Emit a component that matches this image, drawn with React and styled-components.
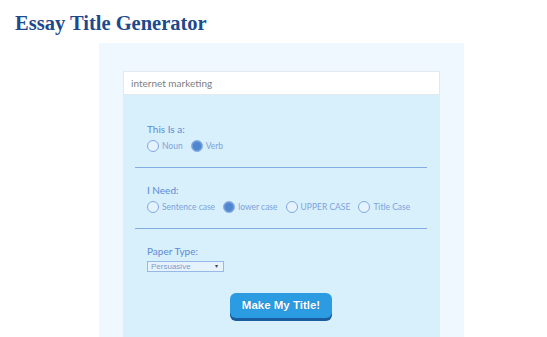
import styled, { createGlobalStyle } from 'styled-components'

const Global = createGlobalStyle`
  html, body {
    margin: 0;
    padding: 0;
    background: #fff;
    overflow: hidden;
  }
`;

const options = {
  kind: ['Noun', 'Verb'],
  need: ['Sentence case', 'lower case', 'UPPER CASE', 'Title Case'],
};

const RadioGroup = ({ items, checked }) => (
  <Row>
    {items.map((item) => (
      <Option key={item}>
        <Circle $on={item === checked} />
        {item}
      </Option>
    ))}
  </Row>
)

const App = () => (
  <>
    <Global />
    <Title>Essay Title Generator</Title>
    <Panel>
      <Keyword defaultValue="internet marketing" readOnly />
      <Form>
        <Section $line>
          <Label>This Is a:</Label>
          <RadioGroup items={options.kind} checked="Verb" />
        </Section>
        <Section $line>
          <Label>I Need:</Label>
          <RadioGroup items={options.need} checked="lower case" />
        </Section>
        <Section>
          <Label>Paper Type:</Label>
          <Select>
            Persuasive
            <Arrow>▾</Arrow>
          </Select>
        </Section>
        <Button>Make My Title!</Button>
      </Form>
    </Panel>
  </>
)

export default App

const Title = styled.h1`
  margin: 0;
  height: 43px;
  padding: 11px 0 0 15px;
  box-sizing: border-box;
  font-family: "Liberation Serif", serif;
  font-weight: 700;
  font-size: 20.5px;
  line-height: 24px;
  color: #1d4a8c;
`;

const Panel = styled.div`
  margin-left: 99px;
  width: 365px;
  height: 294px;
  box-sizing: border-box;
  padding: 28px 24px 0;
  background: #eef8fe;
`;

const Keyword = styled.input`
  display: block;
  width: 100%;
  height: 24px;
  box-sizing: border-box;
  margin: 0;
  padding: 0 7px;
  border: 1px solid #e4e9ee;
  background: #fff;
  font-family: "Lato", sans-serif;
  font-size: 10px;
  color: #808080;
  outline: none;
`;

const Form = styled.div`
  height: 242px;
  box-sizing: border-box;
  padding: 12px 13px 0 12px;
  background: #d8effc;
`;

const Section = styled.div`
  padding: 16px 12px ${(p) => (p.$line ? '15px' : '0')};
  border-bottom: ${(p) => (p.$line ? '1px solid #86ade3' : 'none')};
`;

const Label = styled.div`
  font-family: "Lato", sans-serif;
  font-size: 10px;
  line-height: 13px;
  color: #5b8bd3;
`;

const Row = styled.div`
  display: flex;
  align-items: center;
  gap: 8px;
  margin-top: 4px;
`;

const Option = styled.span`
  display: flex;
  align-items: center;
  gap: 3px;
  font-family: "Lato", sans-serif;
  font-size: 8.5px;
  line-height: 12px;
  color: #7fa3da;
`;

const Circle = styled.span`
  display: block;
  width: 12px;
  height: 12px;
  box-sizing: border-box;
  border-radius: 50%;
  border: 1px solid ${(p) => (p.$on ? '#8db2e6' : '#84a9e0')};
  background: ${(p) => (p.$on ? '#4f86cd' : '#e4f3fd')};
  box-shadow: ${(p) => (p.$on ? 'inset 0 0 0 1px #6d9bd9' : 'none')};
`;

const Select = styled.div`
  position: relative;
  width: 77px;
  height: 11px;
  box-sizing: border-box;
  margin-top: 3px;
  padding-left: 3px;
  border: 1px solid #97b9e7;
  background: #e6f3fd;
  font-family: "Liberation Sans", sans-serif;
  font-size: 8px;
  line-height: 9px;
  color: #7f9dcd;
`;

const Arrow = styled.span`
  position: absolute;
  right: 5px;
  top: 0;
  font-size: 6px;
  line-height: 9px;
  color: #444;
`;

const Button = styled.div`
  width: 102px;
  height: 25px;
  margin: 21px auto 0;
  border-radius: 6px;
  background: #2b9be2;
  box-shadow: 0 3px 0 #1a5c9e;
  font-family: "Liberation Sans", sans-serif;
  font-weight: 700;
  font-size: 11.5px;
  line-height: 25px;
  text-align: center;
  color: #fff;
  text-shadow: 0 0 1px rgba(0, 40, 90, 0.3);
`;
